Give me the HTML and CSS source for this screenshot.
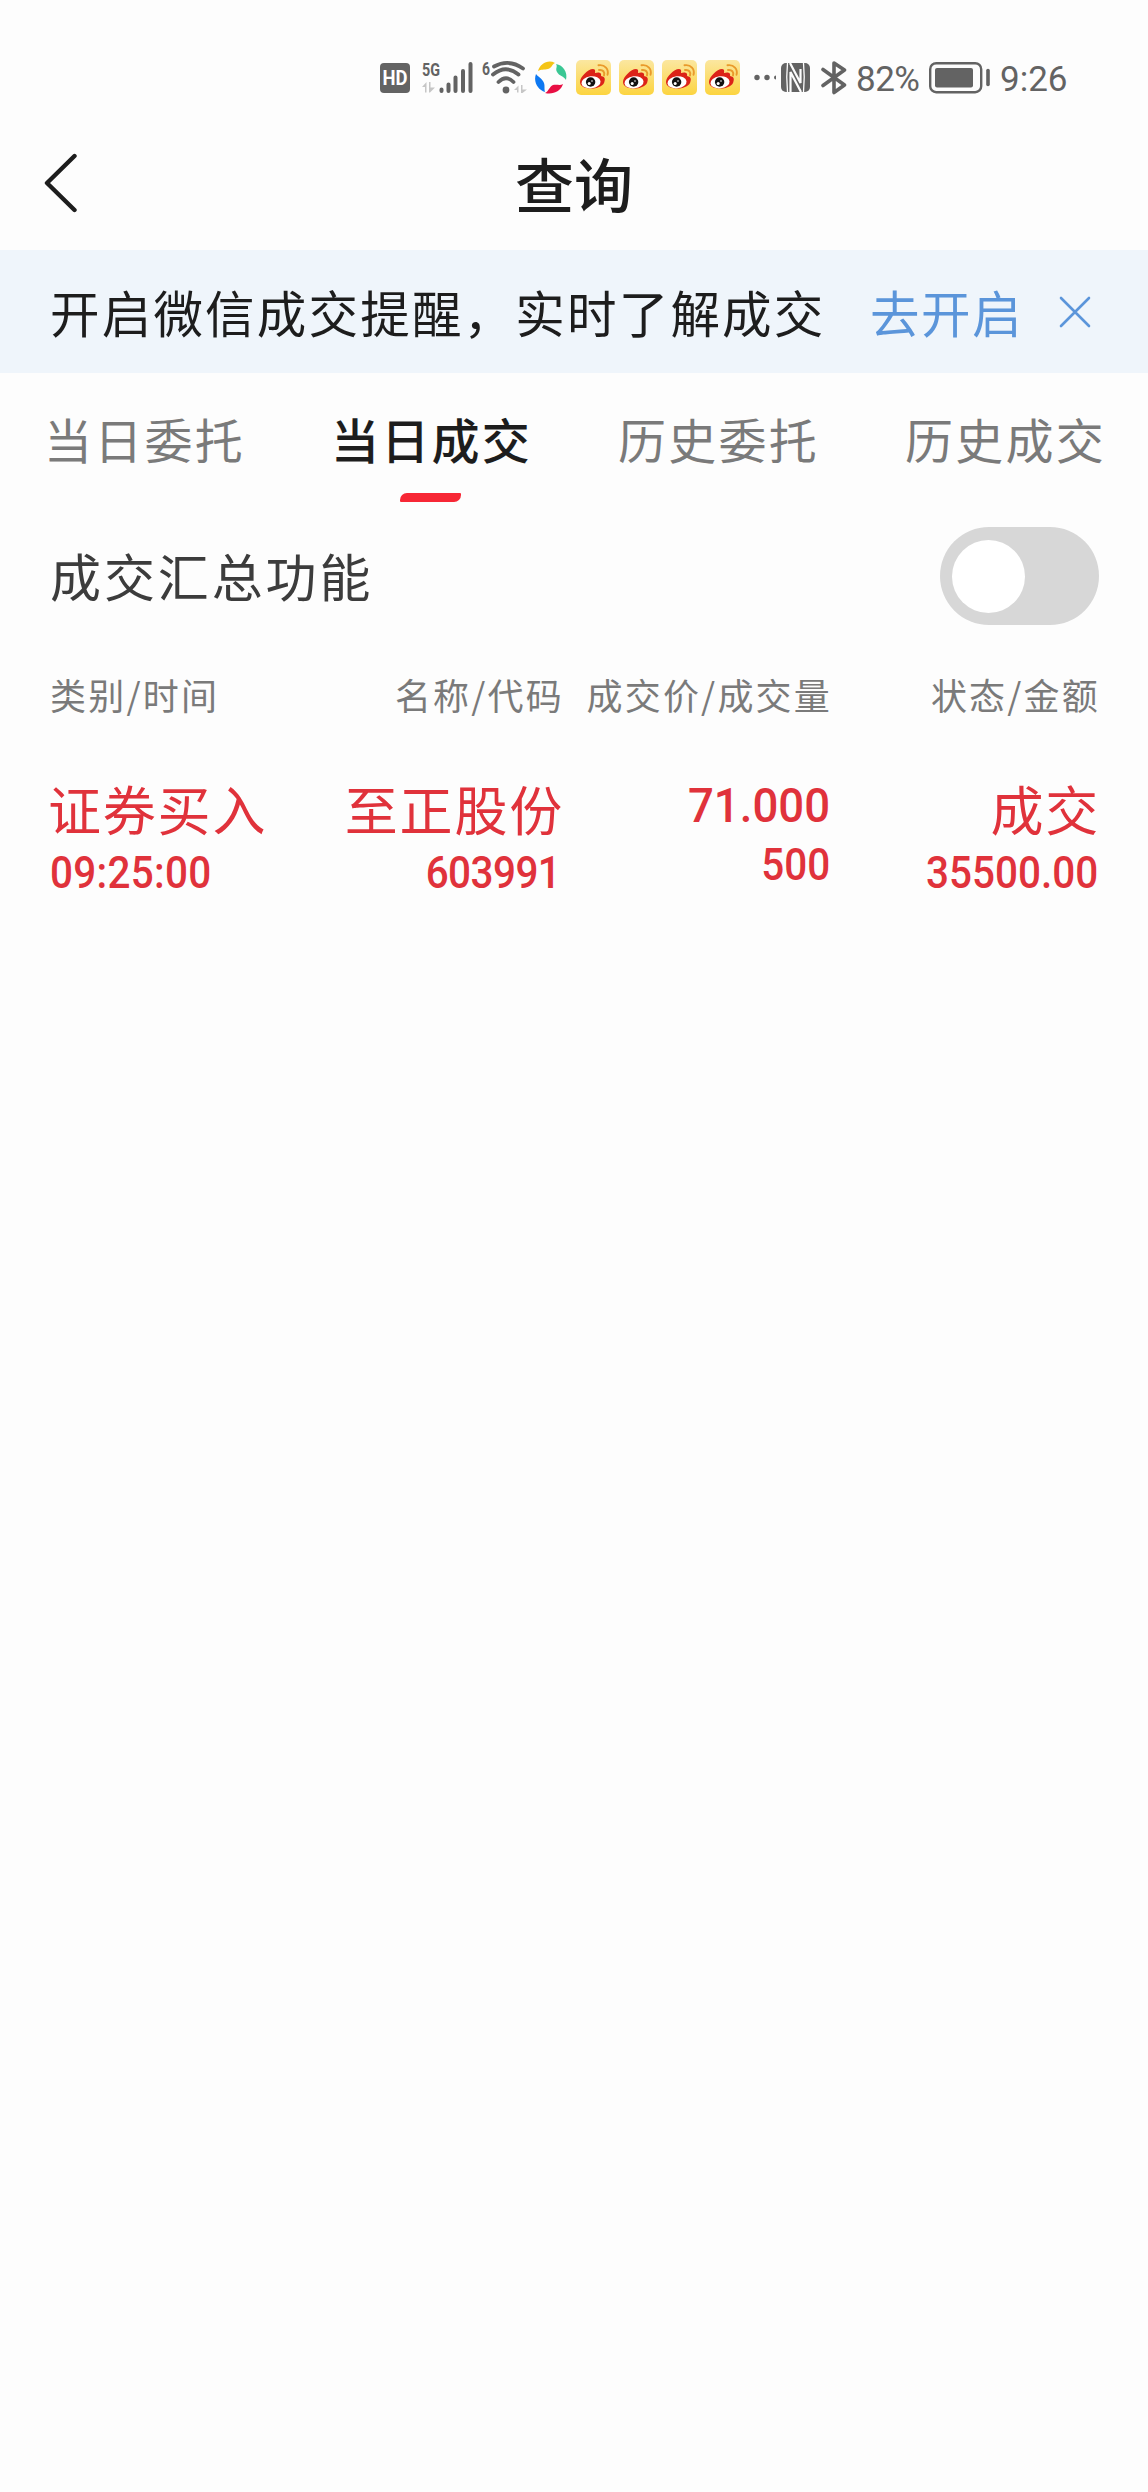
FILE: index.html
```html
<!DOCTYPE html>
<html lang="zh-CN">
<head>
<meta charset="utf-8">
<title>查询</title>
<link rel="stylesheet" href="styles.css">
</head>
<body>
<svg width="0" height="0" class="defs" aria-hidden="true">
  <defs>
    <linearGradient id="gold" x1="0" y1="0" x2="0" y2="1"><stop offset="0" stop-color="#fbe7a0"/><stop offset="1" stop-color="#fcd440"/></linearGradient>
    <symbol id="weibo" viewBox="0 0 35 35">
      <rect width="35" height="35" rx="5" fill="url(#gold)"/>
      <path d="M4 22c0-5 8-13 13-13 3 0 2 3 2 4 3-1 7-1 6 3 5 1 4 4 3 7-3 7-24 8-24-1z" fill="#dc2318"/>
      <ellipse cx="15" cy="22.3" rx="9.6" ry="6" fill="#fff" transform="rotate(-7 15 22.3)"/>
      <circle cx="14.6" cy="22" r="4.7" fill="#111"/>
      <circle cx="13.2" cy="23.4" r="1.5" fill="#fff"/><circle cx="16" cy="21" r=".8" fill="#fff"/>
      <path d="M23 10c4-.5 6 2 5 5.500M22.500 5.300c6.500-1 10.500 4 9 9.500" fill="none" stroke="#e99a2b" stroke-width="1.9" stroke-linecap="round"/>
    </symbol>
  </defs>
</svg>
<div class="statusbar">
  <svg class="hd" width="30" height="42" viewBox="0 0 30 42"><rect y="7" width="30" height="30" rx="4" fill="#636363"/><text x="15" y="28.500" text-anchor="middle" textLength="25" lengthAdjust="spacingAndGlyphs" class="hd-text">HD</text></svg>
  <svg class="signal" width="52" height="42" viewBox="0 0 52 42">
    <text x="1" y="19.500" textLength="18" lengthAdjust="spacingAndGlyphs" class="net-text">5G</text>
    <path d="M1 31l4.500-5v10.500H4V31zM8 26h1.500v5.500H14l-5 5H8z" fill="#c6c6c6"/>
    <g stroke="#636363" stroke-width="4" stroke-linecap="round"><path d="M20.500 33.500v1.500M27.500 28.500V35M34.500 21.500V35M42 15V35M49.500 8V35"/></g>
  </svg>
  <svg class="wifi" width="46" height="42" viewBox="0 0 46 42">
    <text x="0" y="18.500" textLength="8" lengthAdjust="spacingAndGlyphs" class="net-text">6</text>
    <g fill="none" stroke="#636363" stroke-width="3.800" stroke-linecap="round"><path d="M12 10.500Q27 2.500 41 12.500M11 18.500Q24 8 36.500 18.500M16.500 26Q24 18.500 31.500 26"/></g>
    <circle cx="24" cy="34" r="3.400" fill="#636363"/>
    <path d="M32 34l4.500-4.500v7H35V34zM39 29h1.500v4.500H45L40.500 37H39z" fill="#c6c6c6"/>
  </svg>
  <svg class="swirl" width="34" height="42" viewBox="0 0 34 42">
    <path d="M4 15C6 8 14 3 21 7C18 8 18 12 14 13C10 14 7 13 4 15z" fill="#f4c416"/>
    <path d="M22 8c7 1 12 8 10 16c-2-4-7-4-9-8c-2-4 1-5-1-8z" fill="#3ac794"/>
    <path d="M29 28c-2 7-10 11-18 9c4-2 4-6 8-8c4-1 7 1 10-1z" fill="#e80f43"/>
    <path d="M2 18c2 3 6 4 8 9c1 3 0 5 1 9C4 34-1 26 2 18z" fill="#0d78f2"/>
  </svg>
  <svg class="app" width="35" height="35"><use href="#weibo"/></svg>
  <svg class="app" width="35" height="35"><use href="#weibo"/></svg>
  <svg class="app" width="35" height="35"><use href="#weibo"/></svg>
  <svg class="app" width="35" height="35"><use href="#weibo"/></svg>
  <svg class="more" width="22" height="42" viewBox="0 0 22 42" fill="#636363"><circle cx="3" cy="21.500" r="2.700"/><circle cx="13" cy="21.500" r="2.700"/><path d="M22 19.500a2 2 0 0 0 0 4z"/></svg>
  <svg class="nfc" width="29" height="42" viewBox="0 0 29 42"><rect y="7" width="29" height="29" rx="5" fill="#636363"/><path d="M9 7L19.500 27V13M9.500 36V16L20 36" fill="none" stroke="#fdfdfd" stroke-width="2.200"/><path d="M6.500 7Q5 21 6.500 36M22.500 7Q24 21 22.500 36" fill="none" stroke="#fdfdfd" stroke-width="1.300"/></svg>
  <svg class="bt" width="26" height="42" viewBox="0 0 26 42" fill="none" stroke="#636363" stroke-width="3.600" stroke-linecap="round" stroke-linejoin="round"><path d="M2 13.500L23.500 29L13 36.500V7L23.500 14L2 29.500"/></svg>
  <span class="percent">82%</span>
  <svg class="battery" width="62" height="42" viewBox="0 0 62 42"><rect x="1.200" y="7.200" width="51" height="29" rx="6" fill="none" stroke="#636363" stroke-width="2.400"/><rect x="6" y="12" width="38" height="19.500" rx="2" fill="#636363"/><path d="M59 14.500v14" stroke="#636363" stroke-width="3.600" stroke-linecap="round"/></svg>
  <span class="clock">9:26</span>
</div>
<header class="header">
  <svg class="back" width="36" height="60" viewBox="0 0 36 60" fill="none" stroke="#1d1d1d" stroke-width="4.400" stroke-linecap="round" stroke-linejoin="round"><path d="M32.500 3L5 30L32.500 57"/></svg>
  <h1 class="title">查询</h1>
</header>
<div class="banner">
  <span class="banner-text">开启微信成交提醒，实时了解成交</span>
  <a class="banner-link">去开启</a>
  <svg class="close" width="32" height="32" viewBox="0 0 32 32" stroke="#5b95da" stroke-width="2.600" stroke-linecap="round"><path d="M2 2L30 30M30 2L2 30"/></svg>
</div>
<nav class="tabs">
  <div class="tab">当日委托</div>
  <div class="tab active">当日成交</div>
  <div class="tab">历史委托</div>
  <div class="tab">历史成交</div>
</nav>
<div class="summary"><span class="summary-label">成交汇总功能</span><div class="switch"><div class="knob"></div></div></div>
<div class="grid heads">
  <div>类别/时间</div><div>名称/代码</div><div>成交价/成交量</div><div>状态/金额</div>
</div>
<div class="grid trade">
  <div class="cell"><div class="name">证券买入</div><div class="num">09:25:00</div></div>
  <div class="cell"><div class="name">至正股份</div><div class="num code">603991</div></div>
  <div class="cell"><div class="num price">71.000</div><div class="num">500</div></div>
  <div class="cell"><div class="name">成交</div><div class="num">35500.00</div></div>
</div>
</body>
</html>
```

FILE: styles.css
```css
* { box-sizing: border-box; }
body {
  margin: 0;
  min-height: 2492px;
  background: #fdfdfd;
  color: #1d1d1d;
  font-family: "Noto Sans CJK SC", sans-serif;
}
.defs { display: block; height: 0; }
svg { display: block; flex: none; }

.statusbar {
  display: flex;
  align-items: flex-start;
  height: 122px;
  padding: 56px 0 0 380px;
  color: #636363;
  font: 35px/42px Roboto, sans-serif;
}
.hd-text { font: 700 20px Roboto, sans-serif; fill: #fff; }
.net-text { font: 700 19px Roboto, sans-serif; fill: #636363; }
.signal { margin-left: 11px; }
.wifi { margin-left: 9px; }
.swirl { margin-left: 6px; }
.app { margin: 4px 0 0 8px; }
.more { margin-left: 14px; }
.nfc { margin-left: 5px; }
.bt { margin-left: 11px; }
.percent { width: 65px; margin-left: 9px; padding-top: 3px; letter-spacing: -.5px; }
.battery { margin-left: 8px; }
.clock { margin-left: 9px; padding-top: 3px; }

.header {
  display: grid;
  grid-template-columns: 86px 1fr 86px;
  align-items: center;
  height: 128px;
  padding-bottom: 7px;
}
.back { margin-left: 42px; }
.title { margin: 0; text-align: center; font-size: 59px; line-height: 80px; font-weight: 500; }

.banner {
  display: flex;
  align-items: center;
  height: 123px;
  padding: 0 57px 0 50px;
  background: #eff5fb;
  font-size: 49.500px;
  line-height: 70px;
  letter-spacing: 2.200px;
  white-space: nowrap;
}
.banner-link { margin-left: auto; color: #5b95da; letter-spacing: 1.500px; }
.close { margin: 0 0 0 36px; }

.tabs { display: grid; grid-template-columns: repeat(4, 1fr); height: 129px; }
.tab {
  display: flex;
  flex-direction: column;
  align-items: center;
  padding: 30px 0 0 2px;
  color: #7a7a7a;
  font-size: 48px;
  line-height: 70px;
  letter-spacing: 2.200px;
}
.tab.active { color: #1d1d1d; font-weight: 500; }
.tab.active::after {
  content: "";
  width: 61px;
  height: 9px;
  margin: 20px 2px 0 0;
  background: #f72735;
  border-radius: 7px 1px 7px 1px;
}

.summary {
  display: flex;
  align-items: center;
  justify-content: space-between;
  height: 148px;
  padding: 0 49px 0 50px;
  color: #3c3c3c;
  font-size: 51px;
  letter-spacing: 2.900px;
}
.summary-label { padding-bottom: 3px; }
.switch { width: 159px; height: 98px; padding: 13px 12px; border-radius: 49px; background: #d7d7d7; }
.knob { width: 73px; height: 73px; border-radius: 50%; background: #fff; }

.grid {
  display: grid;
  grid-template-columns: 240px 274px 268px 268px;
  padding: 0 48px 0 50px;
  text-align: right;
  white-space: nowrap;
}
.grid > :first-child { text-align: left; }
.heads {
  height: 92px;
  padding-top: 17px;
  color: #7a7a7a;
  font-size: 36px;
  line-height: 54px;
  letter-spacing: 2.200px;
}
.trade { padding-top: 28px; color: #e0323b; }
.name { font-size: 53px; line-height: 76px; letter-spacing: 1.800px; padding-bottom: 3px; }
.cell:first-child .name { margin-left: -2px; }
.num {
  padding-right: 2px;
  font: 500 43.500px/50px Roboto, sans-serif;
  transform: scaleX(.93);
  transform-origin: right;
}
.cell:first-child .num { transform-origin: left; letter-spacing: .3px; }
.code { padding-right: 4px; letter-spacing: -.6px; }
.price { font-size: 49px; line-height: 58px; margin: 7px 0 6px; }
```
